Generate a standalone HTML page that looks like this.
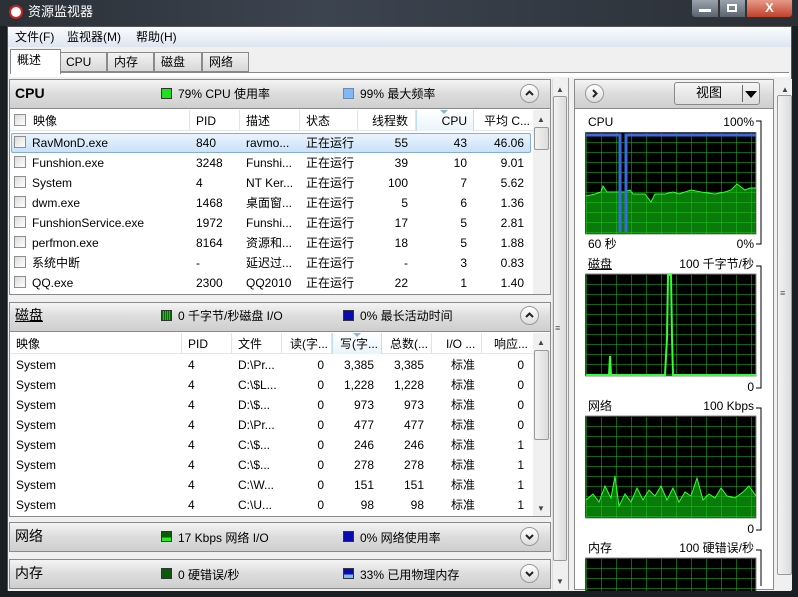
<!DOCTYPE html>
<html><head><meta charset="utf-8"><style>
*{margin:0;padding:0;box-sizing:border-box}
body{width:798px;height:597px;overflow:hidden;background:#1a1f24;font-family:"Liberation Sans","Noto Sans CJK SC",sans-serif;font-size:12px;color:#000;position:relative}
.a{position:absolute}
.t{position:absolute;white-space:nowrap;line-height:14px}
.r{text-align:right}
.hdr{position:absolute;background:linear-gradient(#f4f4f4,#dcdcdc 50%,#cfcfcf);border:1px solid #8a8a8a}
.cb{position:absolute;width:12px;height:12px;border:1px solid #8e8f8f;background:linear-gradient(135deg,#dcdcdc,#fff)}
.sq{position:absolute;width:11px;height:11px;border:1px solid #333}
.circ{position:absolute;width:19px;height:19px;border-radius:50%;border:1px solid #999;background:linear-gradient(#fff,#ddd)}
.circ svg{position:absolute;left:4px;top:4px}
.col{position:absolute;top:0;height:21px;border-right:1px solid #e0e4ea}
</style></head><body>
<div class="a" style="left:0;top:0;width:798px;height:26px;background:linear-gradient(90deg,#2b3036,#3c4450 40%,#2a2f35)"></div>
<div class="a" style="top:5px;left:9px;width:14px;height:14px;border-radius:50%;background:#fff;border:2px solid #c22"></div>
<div class="t" style="left:28px;top:5px;color:#fff;font-size:13px">资源监视器</div>
<div class="a" style="left:691px;top:0;width:28px;height:18px;background:linear-gradient(#9aa3ad,#59636e);border:1px solid #333;border-top:none;border-radius:0 0 0 4px"></div>
<div class="a" style="left:699px;top:9px;width:12px;height:3px;background:#fff"></div>
<div class="a" style="left:719px;top:0;width:27px;height:18px;background:linear-gradient(#9aa3ad,#59636e);border:1px solid #333;border-top:none"></div>
<div class="a" style="left:727px;top:4px;width:10px;height:8px;border:2px solid #fff"></div>
<div class="a" style="left:746px;top:0;width:47px;height:18px;background:linear-gradient(#e59a88,#c2402b);border:1px solid #333;border-top:none;border-radius:0 0 4px 0;color:#fff;font-weight:bold;text-align:center;font-size:13px;line-height:16px">X</div>
<div class="a" style="left:7px;top:26px;width:785px;height:566px;background:#fff;border:1px solid #555"></div>
<div class="a" style="left:8px;top:27px;width:783px;height:20px;background:linear-gradient(#fbfcfe,#dde5f1)"></div>
<div class="t" style="left:15px;top:30px">文件(F)</div>
<div class="t" style="left:67px;top:30px">监视器(M)</div>
<div class="t" style="left:136px;top:30px">帮助(H)</div>
<div class="a" style="left:8px;top:47px;width:783px;height:545px;background:#f0f0f0"></div>
<div class="a" style="left:10px;top:72px;width:779px;height:1px;background:#8a8a8a"></div>
<div class="a" style="left:10px;top:73px;width:779px;height:4px;background:#fff"></div>
<div class="a" style="left:60px;top:52px;width:47px;height:20px;background:linear-gradient(#f2f2f2,#d8d8d8);border:1px solid #8a8a8a"></div>
<div class="a" style="left:107px;top:52px;width:47px;height:20px;background:linear-gradient(#f2f2f2,#d8d8d8);border:1px solid #8a8a8a"></div>
<div class="a" style="left:154px;top:52px;width:48px;height:20px;background:linear-gradient(#f2f2f2,#d8d8d8);border:1px solid #8a8a8a"></div>
<div class="a" style="left:202px;top:52px;width:47px;height:20px;background:linear-gradient(#f2f2f2,#d8d8d8);border:1px solid #8a8a8a"></div>
<div class="a" style="left:10px;top:49px;width:51px;height:25px;background:#fff;border:1px solid #8a8a8a;border-bottom:none"></div>
<div class="t" style="left:17px;top:53px">概述</div>
<div class="t" style="left:66px;top:55px">CPU</div>
<div class="t" style="left:114px;top:55px">内存</div>
<div class="t" style="left:161px;top:55px">磁盘</div>
<div class="t" style="left:209px;top:55px">网络</div>
<div class="a" style="left:10px;top:77px;width:779px;height:513px;background:#f0f0f0"></div>

<div class="a" style="left:9px;top:79px;width:542px;height:216px;background:#fff;border:1px solid #8a8a8a"></div>
<div class="hdr" style="left:9px;top:79px;width:542px;height:30px"></div>
<div class="t" style="left:15px;top:86px;font-size:14px;font-weight:bold">CPU</div>
<div class="sq" style="left:161px;top:88px;background:#1ee01e"></div>
<div class="t" style="left:178px;top:87px">79% CPU 使用率</div>
<div class="sq" style="left:343px;top:88px;background:#7fb8f5;border-color:#6a8ab0"></div>
<div class="t" style="left:360px;top:87px">99% 最大频率</div>
<div class="circ" style="left:520px;top:84px"><svg width="9" height="9"><path d="M1 6L4.5 2.5L8 6" fill="none" stroke="#222" stroke-width="2"/></svg></div>
<div class="a" style="left:10px;top:110px;width:523px;height:21px;background:#fff;border-bottom:1px solid #e3e6ea">
<div class="col" style="left:0;width:180px"></div><div class="col" style="left:180px;width:50px"></div><div class="col" style="left:230px;width:60px"></div><div class="col" style="left:290px;width:58px"></div><div class="col" style="left:348px;width:58px"></div><div class="col" style="left:406px;width:58px;background:linear-gradient(#fff,#e9f4fb);border-left:1px solid #bfe0f0;border-right:1px solid #bfe0f0"></div>
</div>
<div class="cb" style="left:14px;top:114px"></div>
<div class="t" style="left:33px;top:114px">映像</div>
<div class="t" style="left:196px;top:114px">PID</div>
<div class="t" style="left:246px;top:114px">描述</div>
<div class="t" style="left:306px;top:114px">状态</div>
<div class="t r" style="left:358px;top:114px;width:50px">线程数</div>
<div class="t r" style="left:416px;top:114px;width:51px">CPU</div>
<div class="a" style="left:440px;top:110px;width:0;height:0;border-left:4px solid transparent;border-right:4px solid transparent;border-top:4px solid #8cb8d0"></div>
<div class="t" style="left:484px;top:114px">平均 C...</div>
<div class="a" style="left:11px;top:133px;width:520px;height:20px;background:linear-gradient(#eaf4fd,#c9e2f8);border:1px solid #84acdd;border-radius:2px"></div>
<div id="cpurows"></div>
<div class="a" style="left:533px;top:110px;width:17px;height:184px;background:#f0f0f0"></div>
<div class="t" style="left:537px;top:113px;font-size:8px;color:#444">▲</div>
<div class="a" style="left:534px;top:127px;width:15px;height:23px;background:linear-gradient(90deg,#f3f3f3,#dcdcdc);border:1px solid #999;border-radius:2px"></div>

<div class="a" style="left:9px;top:302px;width:542px;height:215px;background:#fff;border:1px solid #8a8a8a"></div>
<div class="hdr" style="left:9px;top:302px;width:542px;height:30px"></div>
<div class="t" style="left:15px;top:308px;font-size:14px;text-decoration:underline">磁盘</div>
<div class="sq" style="left:161px;top:310px;background:repeating-linear-gradient(90deg,#0a6a0a 0 1px,#0c3 1px 2px)"></div>
<div class="t" style="left:178px;top:309px">0 千字节/秒磁盘 I/O</div>
<div class="sq" style="left:343px;top:310px;background:#0a0ab0"></div>
<div class="t" style="left:360px;top:309px">0% 最长活动时间</div>
<div class="circ" style="left:520px;top:306px"><svg width="9" height="9"><path d="M1 6L4.5 2.5L8 6" fill="none" stroke="#222" stroke-width="2"/></svg></div>
<div class="a" style="left:10px;top:333px;width:523px;height:21px;background:#fff;border-bottom:1px solid #e3e6ea">
<div class="col" style="left:0;width:172px"></div><div class="col" style="left:172px;width:50px"></div><div class="col" style="left:222px;width:50px"></div><div class="col" style="left:272px;width:50px"></div><div class="col" style="left:322px;width:50px;background:linear-gradient(#fff,#e9f4fb);border-left:1px solid #bfe0f0;border-right:1px solid #bfe0f0"></div><div class="col" style="left:372px;width:50px"></div><div class="col" style="left:422px;width:50px"></div>
</div>
<div class="t" style="left:16px;top:337px">映像</div>
<div class="t" style="left:188px;top:337px">PID</div>
<div class="t" style="left:238px;top:337px">文件</div>
<div class="t" style="left:290px;top:337px">读(字...</div>
<div class="t" style="left:340px;top:337px">写(字...</div>
<div class="a" style="left:353px;top:333px;width:0;height:0;border-left:4px solid transparent;border-right:4px solid transparent;border-top:4px solid #8cb8d0"></div>
<div class="t" style="left:390px;top:337px">总数(...</div>
<div class="t" style="left:446px;top:337px">I/O ...</div>
<div class="t" style="left:494px;top:337px">响应...</div>
<div id="diskrows"></div>
<div class="a" style="left:533px;top:333px;width:17px;height:183px;background:#f0f0f0"></div>
<div class="t" style="left:537px;top:336px;font-size:8px;color:#444">▲</div>
<div class="t" style="left:537px;top:502px;font-size:8px;color:#444">▼</div>
<div class="a" style="left:534px;top:350px;width:15px;height:90px;background:linear-gradient(90deg,#f3f3f3,#dcdcdc);border:1px solid #999;border-radius:2px"></div>

<div class="hdr" style="left:9px;top:522px;width:542px;height:30px"></div>
<div class="t" style="left:15px;top:529px;font-size:14px">网络</div>
<div class="sq" style="left:161px;top:531px;background:linear-gradient(#0a5a0a 60%,#2e2 60%)"></div>
<div class="t" style="left:178px;top:531px">17 Kbps 网络 I/O</div>
<div class="sq" style="left:343px;top:531px;background:#0a0ab0"></div>
<div class="t" style="left:360px;top:531px">0% 网络使用率</div>
<div class="circ" style="left:520px;top:527px"><svg width="9" height="9"><path d="M1 3L4.5 6.5L8 3" fill="none" stroke="#222" stroke-width="2"/></svg></div>
<div class="hdr" style="left:9px;top:559px;width:542px;height:30px"></div>
<div class="t" style="left:15px;top:566px;font-size:14px">内存</div>
<div class="sq" style="left:161px;top:568px;background:#0a5a0a"></div>
<div class="t" style="left:178px;top:568px">0 硬错误/秒</div>
<div class="sq" style="left:343px;top:568px;background:linear-gradient(#0a0ab0 60%,#7fb8f5 60%)"></div>
<div class="t" style="left:360px;top:568px">33% 已用物理内存</div>
<div class="circ" style="left:520px;top:564px"><svg width="9" height="9"><path d="M1 3L4.5 6.5L8 3" fill="none" stroke="#222" stroke-width="2"/></svg></div>

<div class="a" style="left:552px;top:79px;width:15px;height:511px;background:#f0f0f0;border-left:1px solid #ddd"></div>
<div class="t" style="left:556px;top:83px;font-size:8px;color:#444">▲</div>
<div class="a" style="left:553px;top:96px;width:14px;height:465px;background:linear-gradient(90deg,#f3f3f3,#dcdcdc);border:1px solid #999;border-radius:2px"></div>
<div class="t" style="left:555px;top:321px;font-size:9px;color:#555">≡</div>
<div class="t" style="left:556px;top:575px;font-size:8px;color:#444">▼</div>
<div class="a" style="left:568px;top:78px;width:1px;height:512px;background:#999"></div>

<div class="a" style="left:574px;top:79px;width:200px;height:511px;background:#fff;border:1px solid #8a8a8a"></div>
<div class="hdr" style="left:574px;top:79px;width:200px;height:30px"></div>
<div class="circ" style="left:585px;top:84px"><svg width="9" height="9"><path d="M3 1L6.5 4.5L3 8" fill="none" stroke="#222" stroke-width="2"/></svg></div>
<div class="a" style="left:674px;top:82px;width:86px;height:23px;border:1px solid #888;border-radius:3px;background:linear-gradient(#f6f6f6,#ddd)"></div>
<div class="t" style="left:696px;top:86px;font-size:13px">视图</div>
<div class="a" style="left:742px;top:85px;width:1px;height:17px;background:#666"></div>
<div class="a" style="left:745px;top:91px;width:0;height:0;border-left:6px solid transparent;border-right:6px solid transparent;border-top:7px solid #000"></div>
<div class="a" style="left:776px;top:79px;width:16px;height:511px;background:#f0f0f0"></div>
<div class="t" style="left:781px;top:83px;font-size:8px;color:#444">▲</div>
<div class="a" style="left:777px;top:95px;width:15px;height:480px;background:linear-gradient(90deg,#f3f3f3,#dcdcdc);border:1px solid #999;border-radius:2px"></div>
<div class="t" style="left:780px;top:286px;font-size:9px;color:#555">≡</div>

<div class="t" style="left:588px;top:115px">CPU</div><div class="t r" style="left:690px;top:115px;width:64px">100%</div>
<div class="t" style="left:588px;top:237px">60 秒</div><div class="t r" style="left:700px;top:237px;width:54px">0%</div>
<div class="t" style="left:588px;top:257px;text-decoration:underline">磁盘</div><div class="t r" style="left:660px;top:257px;width:94px">100 千字节/秒</div>
<div class="t r" style="left:700px;top:380px;width:54px">0</div>
<div class="t" style="left:588px;top:399px">网络</div><div class="t r" style="left:660px;top:399px;width:94px">100 Kbps</div>
<div class="t r" style="left:700px;top:522px;width:54px">0</div>
<div class="t" style="left:588px;top:541px">内存</div><div class="t r" style="left:660px;top:541px;width:94px">100 硬错误/秒</div>
<svg class="a" style="left:756px;top:116px" width="8" height="470"><path d="M0 5H5V128H0M0 150H5V272H0M0 292H5V414H0M0 434H5V470" fill="none" stroke="#000"/></svg>

<svg class="a" style="left:585px;top:132px" width="172" height="460">
<defs><pattern id="g" width="15" height="10" patternUnits="userSpaceOnUse" x="1" y="0"><path d="M0 0V10M0 0H15" stroke="#1fc81f" stroke-width="1" fill="none"/></pattern></defs>
<g><rect x="0" y="0" width="171" height="102" fill="#000" stroke="#888"/>
<path d="M1 64 L10 62 L16 60 L18 54 L22 60 L40 60 L45 58 L48 62 L60 62 L66 70 L70 62 L80 62 L88 60 L94 62 L100 60 L106 58 L116 60 L130 62 L140 60 L146 58 L152 52 L160 58 L165 56 L171 56 V102 H1Z" fill="#0a7a0a"/>
<rect x="1" y="1" width="170" height="101" fill="url(#g)"/>
<path d="M1 64 L10 62 L16 60 L18 54 L22 60 L40 60 L45 58 L48 62 L60 62 L66 70 L70 62 L80 62 L88 60 L94 62 L100 60 L106 58 L116 60 L130 62 L140 60 L146 58 L152 52 L160 58 L165 56 L171 56" fill="none" stroke="#3f3"/>
<path d="M1 3H35V100M41 100V3H171" fill="none" stroke="#3a6ae0" stroke-width="3"/></g>
<g transform="translate(0,142)"><rect x="0" y="0" width="171" height="102" fill="#000" stroke="#888"/>
<rect x="1" y="1" width="170" height="101" fill="url(#g)"/>
<path d="M1 101 L24 101 L25 82 L26 101 L80 101 L82 64 L83 1 L86 1 L87 64 L88 101 L171 101" fill="none" stroke="#3f3" stroke-width="2"/></g>
<g transform="translate(0,284)"><rect x="0" y="0" width="171" height="102" fill="#000" stroke="#888"/>
<path d="M1 84 L8 78 L14 86 L20 70 L26 82 L30 60 L34 90 L40 78 L46 86 L52 72 L58 84 L64 74 L70 80 L76 70 L82 84 L88 72 L94 86 L100 76 L106 80 L112 62 L118 84 L124 78 L130 82 L136 72 L142 80 L150 82 L158 76 L164 70 L171 80 V102 H1Z" fill="#0a7a0a"/>
<rect x="1" y="1" width="170" height="101" fill="url(#g)"/>
<path d="M1 84 L8 78 L14 86 L20 70 L26 82 L30 60 L34 90 L40 78 L46 86 L52 72 L58 84 L64 74 L70 80 L76 70 L82 84 L88 72 L94 86 L100 76 L106 80 L112 62 L118 84 L124 78 L130 82 L136 72 L142 80 L150 82 L158 76 L164 70 L171 80" fill="none" stroke="#3f3"/></g>
<g transform="translate(0,426)"><rect x="0" y="0" width="171" height="40" fill="#000" stroke="#888"/>
<rect x="1" y="1" width="170" height="40" fill="url(#g)"/></g>
</svg>

<div class="a" style="left:0;top:591px;width:798px;height:6px;background:#1a1f24"></div>

<script>
var c=[["RavMonD.exe","840","ravmo...","55","43","46.06"],["Funshion.exe","3248","Funshi...","39","10","9.01"],["System","4","NT Ker...","100","7","5.62"],["dwm.exe","1468","桌面窗...","5","6","1.36"],["FunshionService.exe","1972","Funshi...","17","5","2.81"],["perfmon.exe","8164","资源和...","18","5","1.88"],["系统中断","-","延迟过...","-","3","0.83"],["QQ.exe","2300","QQ2010","22","1","1.40"]];
var h="";c.forEach(function(r,i){var y=136+i*20;h+='<div class="cb" style="left:14px;top:'+(y)+'px"></div><div class="t" style="left:32px;top:'+y+'px">'+r[0]+'</div><div class="t" style="left:196px;top:'+y+'px">'+r[1]+'</div><div class="t" style="left:246px;top:'+y+'px">'+r[2]+'</div><div class="t" style="left:306px;top:'+y+'px">正在运行</div><div class="t r" style="left:358px;top:'+y+'px;width:50px">'+r[3]+'</div><div class="t r" style="left:416px;top:'+y+'px;width:51px">'+r[4]+'</div><div class="t r" style="left:474px;top:'+y+'px;width:50px">'+r[5]+'</div>';});
document.getElementById("cpurows").outerHTML=h;
var d=[["D:\\Pr...","3,385","0"],["C:\\$L...","1,228","0"],["D:\\$...","973","0"],["D:\\Pr...","477","0"],["C:\\$...","246","1"],["C:\\$...","278","1"],["C:\\W...","151","1"],["C:\\U...","98","1"]];
h="";d.forEach(function(r,i){var y=358+i*20;h+='<div class="t" style="left:16px;top:'+y+'px">System</div><div class="t" style="left:188px;top:'+y+'px">4</div><div class="t" style="left:238px;top:'+y+'px">'+r[0]+'</div><div class="t r" style="left:282px;top:'+y+'px;width:42px">0</div><div class="t r" style="left:332px;top:'+y+'px;width:42px">'+r[1]+'</div><div class="t r" style="left:382px;top:'+y+'px;width:42px">'+r[1]+'</div><div class="t" style="left:451px;top:'+y+'px">标准</div><div class="t r" style="left:482px;top:'+y+'px;width:42px">'+r[2]+'</div>';});
document.getElementById("diskrows").outerHTML=h;
</script>
</body></html>
